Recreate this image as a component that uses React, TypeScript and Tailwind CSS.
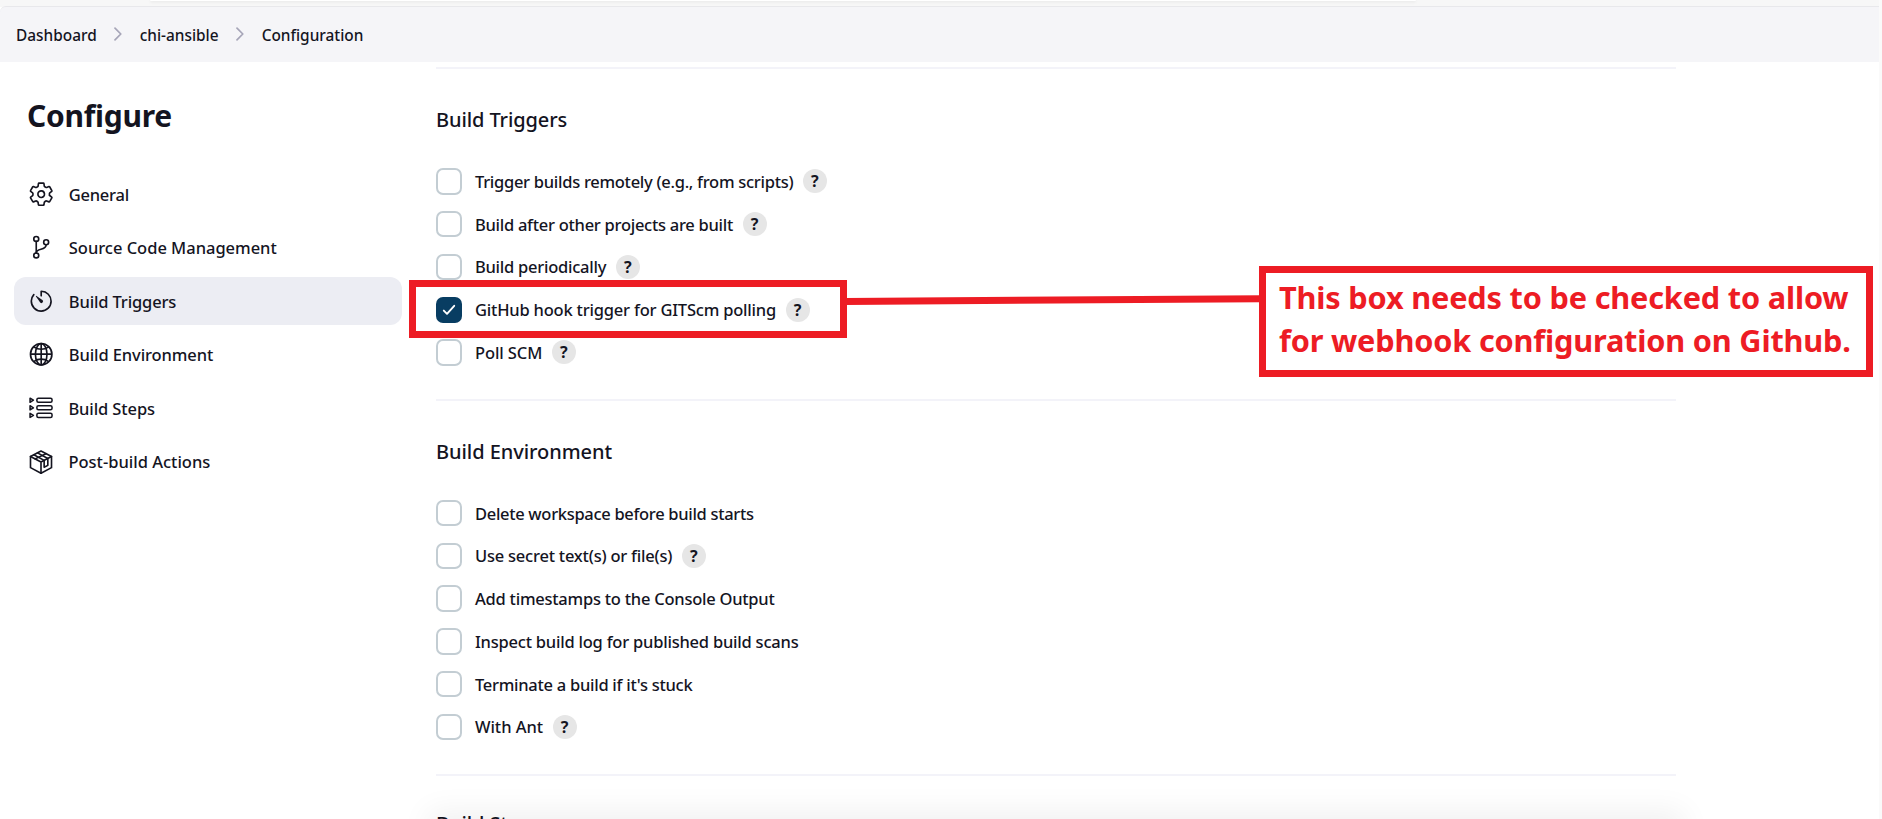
import type { ReactNode } from "react";
import { IoGitBranchOutline, IoGlobeOutline, IoSettingsOutline, IoTimerOutline } from "react-icons/io5";

function StepsIcon() {
  return (
    <svg viewBox="0 0 24 24" className="size-[26px]" fill="none" stroke="currentColor" strokeWidth="1.4" strokeLinejoin="round">
      {[2.9, 9.9, 16.9].map((y) => (
        <g key={y}>
          <path d={`M1.9 ${y} L5 ${y + 1.9} L1.9 ${y + 3.8} Z`} />
          <rect x="8.2" y={y} width="14" height="3.8" rx="1.4" />
        </g>
      ))}
    </svg>
  );
}

function PackageIcon() {
  return (
    <svg viewBox="0 0 24 24" className="size-[26px]" fill="none" stroke="currentColor" strokeWidth="1.5" strokeLinejoin="round" strokeLinecap="round">
      <path d="M12 1.9 L21.7 6.9 V17.2 L12 22.3 L2.3 17.2 V6.9 Z" />
      <path d="M2.3 6.9 L12 12 L21.7 6.9 M12 12 V22.3" />
      <path d="M5.4 5.3 L14.9 10.5 V16.9 L18.3 15.1 V8.7 L8.8 3.6" />
      <path d="M6.6 9.1 L16.6 4.3" />
    </svg>
  );
}

type NavItem = { label: string; icon: ReactNode; tracking: string; active?: boolean };

const nav: NavItem[] = [
  { label: "General", icon: <IoSettingsOutline className="size-[26.4px]" />, tracking: "tracking-[-0.25px]" },
  { label: "Source Code Management", icon: <IoGitBranchOutline className="size-[26.4px]" />, tracking: "tracking-[-0.02px]" },
  { label: "Build Triggers", icon: <IoTimerOutline className="size-[26.4px]" />, tracking: "tracking-[-0.14px]", active: true },
  { label: "Build Environment", icon: <IoGlobeOutline className="size-[26.4px]" />, tracking: "tracking-[-0.1px]" },
  { label: "Build Steps", icon: <StepsIcon />, tracking: "tracking-[-0.1px]" },
  { label: "Post-build Actions", icon: <PackageIcon />, tracking: "tracking-[0px]" },
];

type Option = { label: string; tracking: string; help?: boolean; checked?: boolean };

const triggers: Option[] = [
  { label: "Trigger builds remotely (e.g., from scripts)", tracking: "tracking-[-0.28px]", help: true },
  { label: "Build after other projects are built", tracking: "tracking-[-0.27px]", help: true },
  { label: "Build periodically", tracking: "tracking-[-0.25px]", help: true },
  { label: "GitHub hook trigger for GITScm polling", tracking: "tracking-[-0.2px]", help: true, checked: true },
  { label: "Poll SCM", tracking: "tracking-[-0.1px]", help: true },
];

const environment: Option[] = [
  { label: "Delete workspace before build starts", tracking: "tracking-[-0.31px]" },
  { label: "Use secret text(s) or file(s)", tracking: "tracking-[-0.22px]", help: true },
  { label: "Add timestamps to the Console Output", tracking: "tracking-[-0.24px]" },
  { label: "Inspect build log for published build scans", tracking: "tracking-[-0.22px]" },
  { label: "Terminate a build if it's stuck", tracking: "tracking-[-0.27px]" },
  { label: "With Ant", tracking: "tracking-[-0.05px]", help: true },
];

function OptionRow({ option }: { option: Option }) {
  return (
    <div className="flex h-[42.75px] items-start">
      <label className="flex h-[26.4px] items-center">
        <input type="checkbox" defaultChecked={option.checked} className="peer sr-only" />
        <span
          className={
            option.checked
              ? "flex size-[26.4px] items-center justify-center rounded-[7px] bg-[#083d62]"
              : "size-[26.4px] rounded-[7px] border-2 border-[#c3cdd3] bg-white"
          }
        >
          {option.checked && (
            <svg viewBox="0 0 14 14" className="size-3.5" fill="none" stroke="#fff" strokeWidth="1.9" strokeLinecap="round" strokeLinejoin="round">
              <path d="M1.8 7.6 L5 10.8 L12.2 2.8" />
            </svg>
          )}
        </span>
        <span className={`ml-[12.6px] pt-px text-[16.5px] leading-[26px] whitespace-nowrap ${option.tracking}`}>{option.label}</span>
      </label>
      {option.help && (
        <button className="mt-[1px] ml-[9.6px] flex size-6 items-center justify-center rounded-full bg-[#e6e6e6] text-[16px] leading-none font-bold">?</button>
      )}
    </div>
  );
}

type SectionProps = { title: string; tracking: string; titlePad: string; listPad: string; options: Option[] };

function Section({ title, tracking, titlePad, listPad, options }: SectionProps) {
  return (
    <section className="w-[1240px] border-t-2 border-[#f3f3f9]">
      <h2 className={`text-[20px] leading-[30px] ${titlePad} ${tracking}`}>{title}</h2>
      <div className={listPad}>
        {options.map((o) => (
          <OptionRow key={o.label} option={o} />
        ))}
      </div>
    </section>
  );
}

function Chevron() {
  return (
    <svg viewBox="0 0 8 14" className="mx-[17.5px] h-3.5 w-2 -translate-y-px" fill="none" stroke="#a6a5b8" strokeWidth="1.7" strokeLinecap="round" strokeLinejoin="round">
      <path d="M1 1.2 L6.8 7 L1 12.8" />
    </svg>
  );
}

export default function App() {
  return (
    <div className="relative flex h-[819px] w-[1882px] overflow-hidden bg-[#fafafa] font-['Noto_Sans','Open_Sans',sans-serif] font-medium text-[#14141f]">
      <div className="flex w-[1879px] flex-col bg-white">
        <div className="h-[7px] shrink-0 overflow-hidden bg-[#f7f7f7]">
          <div className="ml-[150px] h-px w-[1266px] rounded-b-full bg-white shadow-[0_1px_3px_rgba(0,0,0,0.12)]" />
        </div>
        <header className="-mt-px flex h-[56px] shrink-0 items-center rounded-tl-[6px] border-t border-[#e8e8eb] bg-[#f5f5f8] pl-4 text-[15.4px]">
          <span className="translate-y-px">Dashboard</span>
          <Chevron />
          <span className="translate-y-px">chi-ansible</span>
          <Chevron />
          <span className="translate-y-px">Configuration</span>
        </header>

        <div className="flex min-h-0 flex-1">
          <aside className="w-[436px] shrink-0 pl-[14px]">
            <h1 className="mt-[34px] pl-[13px] text-[30px] leading-10 font-bold tracking-[-0.25px]">Configure</h1>
            <nav className="mt-[34px] flex w-[388px] flex-col gap-[5.5px]">
              {nav.map((item) => (
                <a
                  key={item.label}
                  className={`flex h-12 items-center gap-[14.4px] rounded-[12px] pl-[14px] text-[16.5px] ${item.active ? "bg-[#ecedf3]" : ""}`}
                >
                  {item.icon}
                  <span className={`translate-y-[0.8px] ${item.tracking}`}>{item.label}</span>
                </a>
              ))}
            </nav>
          </aside>

          <main className="flex-1 overflow-hidden pt-[5px]">
            <Section title="Build Triggers" tracking="tracking-[-0.1px]" titlePad="pt-[35.6px]" listPad="pt-[33.7px] pb-[17.2px]" options={triggers} />
            <Section title="Build Environment" tracking="tracking-[-0.06px]" titlePad="pt-[36px]" listPad="pt-[32.7px] pb-[17.8px]" options={environment} />
            <Section title="Build Steps" tracking="tracking-[-0.1px]" titlePad="pt-[33px]" listPad="pt-8" options={[]} />
          </main>
        </div>
      </div>

      {/* sticky action bar shadow */}
      <div className="absolute top-[819px] left-[436px] h-16 w-[1240px] shadow-[0_0_30px_8px_rgba(0,0,0,0.06)]" />

      {/* annotation */}
      <div className="absolute top-[280px] left-[409px] h-[58px] w-[438px] border-[7px] border-[#ed1c24]" />
      <svg className="absolute top-[290px] left-[845px] h-5 w-[416px]" viewBox="0 0 416 20">
        <path d="M0 11.5 L416 8.7" stroke="#ed1c24" strokeWidth="7" />
      </svg>
      <div className="absolute top-[266px] left-[1259px] h-[111px] w-[614px] border-[7px] border-[#ed1c24] bg-white pt-[2.6px] pl-[13px] text-[30.7px] leading-[43px] font-bold tracking-[-0.18px] whitespace-nowrap text-[#ed1c24]">
        This box needs to be checked to allow
        <br />
        for webhook configuration on Github.
      </div>
    </div>
  );
}
